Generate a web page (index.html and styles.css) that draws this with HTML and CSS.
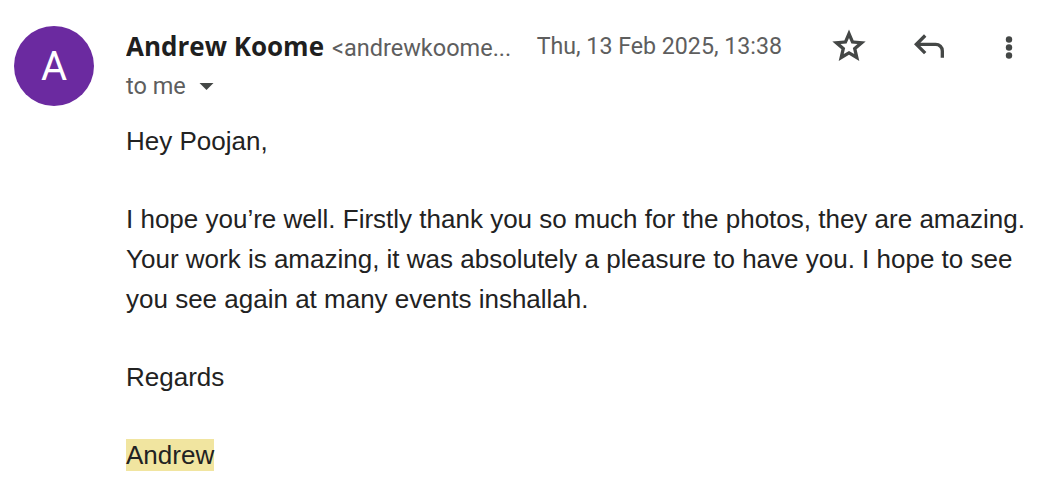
FILE: index.html
```html
<!DOCTYPE html>
<html>
<head>
<meta charset="utf-8">
<link rel="stylesheet" href="styles.css">
</head>
<body>
<div class="message">
  <div class="avatar">A</div>
  <div class="main">
    <div class="header-row">
      <div class="sender">
        <span class="name">Andrew Koome</span>
        <span class="email">&lt;andrewkoome...</span>
      </div>
      <div class="date">Thu, 13 Feb 2025, 13:38</div>
      <div class="actions">
        <span class="icon-btn">
          <svg width="40" height="40" viewBox="0 -960 960 960"><path fill="#444746" d="m354-287 126-76 126 77-33-144 111-96-146-13-58-136-58 135-146 13 111 97-33 143ZM233-120l65-281L80-587l288-25 112-265 112 265 288 25-218 186 65 281-247-149-247 149Z"/></svg>
        </span>
        <span class="icon-btn">
          <svg width="40" height="40" viewBox="0 -960 960 960"><path fill="#444746" d="M760-200v-160q0-50-35-85t-85-35H273l144 144-57 56-240-240 240-240 57 56-144 144h367q83 0 141.5 58.5T840-360v160h-80Z"/></svg>
        </span>
        <span class="icon-btn">
          <svg width="40" height="40" viewBox="0 0 40 40"><circle cx="20" cy="13.5" r="3.2" fill="#444746"/><circle cx="20" cy="21.5" r="3.2" fill="#444746"/><circle cx="20" cy="29.5" r="3.2" fill="#444746"/></svg>
        </span>
      </div>
    </div>
    <div class="recipient">
      <span>to me</span>
      <svg class="caret" width="15" height="7" viewBox="0 0 16 8"><path d="M0 0h16L8 8z" fill="#444746"/></svg>
    </div>
    <div class="body">
      <p>Hey Poojan,</p>
      <p>I hope you’re well. Firstly thank you so much for the photos, they are amazing. Your work is amazing, it was absolutely a pleasure to have you. I hope to see you see again at many events inshallah.</p>
      <p>Regards</p>
      <p><span class="hl">Andrew</span></p>
    </div>
  </div>
</div>
</body>
</html>
```

FILE: styles.css
```css
html, body {
  margin: 0;
  padding: 0;
  background: #ffffff;
}

.message {
  display: flex;
  align-items: flex-start;
  padding: 26px 0 0 14px;
}

.avatar {
  flex: none;
  width: 80px;
  height: 80px;
  border-radius: 50%;
  background: #6b2aa0;
  color: #ffffff;
  font-family: Roboto, "Liberation Sans", sans-serif;
  font-size: 40px;
  display: flex;
  align-items: center;
  justify-content: center;
  margin-right: 32px;
}

.main {
  flex: 1;
  min-width: 0;
}

.header-row {
  display: flex;
  align-items: center;
  height: 40px;
}

.sender {
  flex: 1;
  min-width: 0;
  white-space: nowrap;
  overflow: hidden;
}

.name {
  font-family: "Open Sans", Roboto, sans-serif;
  font-weight: 700;
  font-size: 26px;
  color: #1f1f1f;
}

.email {
  font-family: Roboto, "Liberation Sans", sans-serif;
  font-size: 23.5px;
  color: #5e5e5e;
  margin-left: 4px;
}

.date {
  font-family: Roboto, "Liberation Sans", sans-serif;
  font-size: 23.2px;
  color: #5e5e5e;
  white-space: nowrap;
  margin-left: 16px;
}

.actions {
  display: flex;
  margin-left: 27px;
  margin-right: 9px;
}

.icon-btn {
  width: 80px;
  height: 40px;
  display: flex;
  align-items: center;
  justify-content: center;
}

.icon-btn svg {
  display: block;
}

.recipient {
  display: flex;
  align-items: center;
  gap: 13px;
  margin-top: 2px;
  font-family: Roboto, "Liberation Sans", sans-serif;
  font-size: 23.5px;
  color: #5e5e5e;
  height: 36px;
}

.caret {
  display: block;
  width: 15px;
  height: 7px;
}

.body {
  margin-top: 17px;
  width: 915px;
  font-family: "Liberation Sans", Arial, sans-serif;
  font-size: 26px;
  line-height: 40px;
  color: #222222;
}

.body p {
  margin: 0 0 38px 0;
}

.hl {
  background: #f1e5a0;
  padding: 1px 0;
}
```
